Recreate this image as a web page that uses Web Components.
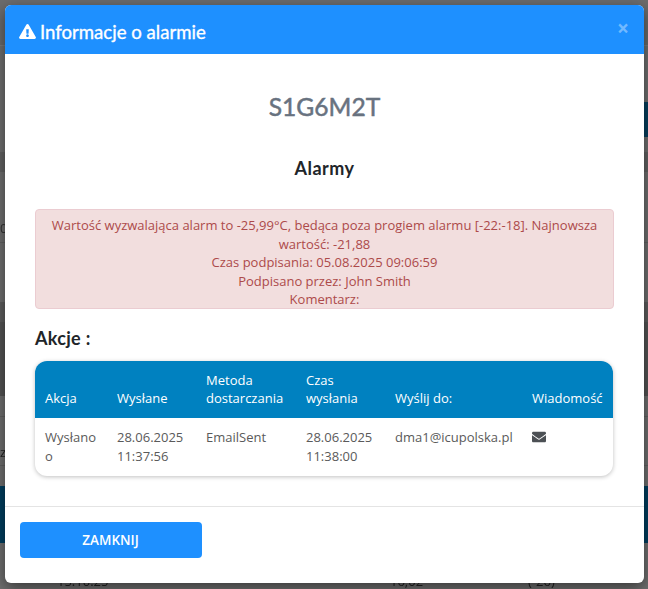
<!DOCTYPE html>
<html lang="pl"><head><meta charset="utf-8"><title>Informacje o alarmie</title>
<style>
html,body{margin:0;padding:0;height:100%;overflow:hidden}
body{font-family:"Open Sans","Liberation Sans",sans-serif;font-size:13px;color:#495057;background:#727272}
</style></head><body>
<bg-page></bg-page>
<alarm-modal>
  <span slot="title">Informacje o alarmie</span>
  <h-device>S1G6M2T</h-device>
  <h-section>Alarmy</h-section>
  <alarm-alert>
    Wartość wyzwalająca alarm to -25,99°C, będąca poza progiem alarmu [-22:-18]. Najnowsza wartość: -21,88<br>
    Czas podpisania: 05.08.2025 09:06:59<br>
    Podpisano przez: John Smith<br>
    Komentarz:
  </alarm-alert>
  <h-actions>Akcje :</h-actions>
  <action-table></action-table>
</alarm-modal>
<script>
function def(name, html){
  customElements.define(name, class extends HTMLElement{
    constructor(){super();this.attachShadow({mode:"open"}).innerHTML=html;}
  });
}
const head='"Lato","Noto Sans",sans-serif';
def("bg-page",`<style>
:host{display:block;height:589px;overflow:hidden;filter:blur(.6px);font:13px "Open Sans",sans-serif;color:#222}
.r{box-sizing:border-box;display:flex;align-items:center;background:#707070}
.l{border-bottom:1px solid #626262}
.band{margin-left:auto;width:60px;height:100%;background:#07405f}
.t{flex:0 0 390px;box-sizing:border-box;padding-left:57px}.u{flex:0 0 138px}
</style>
<div class="r l" style="height:46px;background:#6c6c6c;border-bottom-color:#7c7c7c"></div>
<div class="r" style="height:56px"></div>
<div class="r" style="height:35px"><span class="band"></span></div>
<div class="r" style="height:15px"></div>
<div class="r" style="height:20px;background:#636363"></div>
<div class="r l" style="height:71px;color:#333"><span style="margin-top:42px">0</span></div>
<div class="r" style="height:59px"></div>
<div class="r" style="height:20px;background:#5f5f5f"></div>
<div class="r" style="height:74px;background:#555"></div>
<div class="r l" style="height:21px"></div>
<div class="r l" style="height:49px"><span style="margin-top:22px">z</span></div>
<div class="r" style="height:20px"></div>
<div class="r" style="height:57px;background:#013f60"></div>
<div class="r" style="height:46px;align-items:flex-start"><span class="t" style="margin-top:29px">15:10:25</span><span class="u" style="margin-top:29px">16,02</span><span style="margin-top:29px">(-26)</span></div>
`);
def("alarm-modal",`<style>
:host{display:flex;flex-direction:column;position:absolute;left:5px;top:5px;width:639px;height:578px;background:#fff;border-radius:6px;box-shadow:0 5px 15px rgba(0,0,0,.5);overflow:hidden}
header{flex:none;height:49px;box-sizing:border-box;padding:4px 0 0 14px;background:#1e90ff;color:#fff;display:flex;align-items:center;gap:4px;position:relative;font:400 18.6px ${head};-webkit-text-stroke:.35px #fff}
header svg{width:17px;height:15px;fill:#fff;flex:none}
.x{position:absolute;right:15px;top:11px;font:700 21px/24px "Open Sans",sans-serif;color:rgba(255,255,255,.38);-webkit-text-stroke:0}
main{flex:1;padding:0 30px;display:flex;flex-direction:column}
footer{flex:none;height:77px;border-top:1px solid #e4e4e4;padding:15px;box-sizing:border-box}
button{display:block;width:182px;height:36px;border:0;border-radius:4px;background:#1e90ff;color:#fff;font:600 13.5px "Open Sans",sans-serif;padding:0 1px 0 0}
</style>
<header><svg viewBox="0 0 576 512"><path d="M569.517 440.013C587.975 472.007 564.806 512 527.94 512H48.054c-36.937 0-59.999-40.055-41.577-71.987L246.423 24.995c18.467-32.009 64.72-31.951 83.154 0l239.94 415.018zM288 354c-25.405 0-46 20.595-46 46s20.595 46 46 46 46-20.595 46-46-20.595-46-46-46zm-43.673-165.346l7.418 136c.347 6.364 5.609 11.346 11.982 11.346h48.546c6.373 0 11.635-4.982 11.982-11.346l7.418-136c.375-6.874-5.098-12.654-11.982-12.654h-63.383c-6.884 0-12.356 5.78-11.981 12.654z"/></svg><slot name="title"></slot><span class="x">×</span></header>
<main><slot></slot></main>
<footer><button>ZAMKNIJ</button></footer>`);
def("h-device",`<style>:host{display:block;margin-top:36px;text-align:center;font:400 24.6px/34px ${head};-webkit-text-stroke:.5px #68727f;color:#68727f}</style><slot></slot>`);
def("h-section",`<style>:host{display:block;margin-top:32px;text-align:center;font:700 18px/24px ${head};letter-spacing:.45px;color:#212529}</style><slot></slot>`);
def("alarm-alert",`<style>:host{display:block;margin-top:29px;box-sizing:border-box;height:100px;padding:6px 12px;background:#f2dede;border:1px solid #ebccd1;border-radius:4px;color:#ad4a4a;text-align:center;font:13px/18.5px "Open Sans",sans-serif}</style><slot></slot>`);
def("h-actions",`<style>:host{display:block;margin-top:17px;font:700 18px/24px ${head};letter-spacing:.3px;color:#212529}</style><slot></slot>`);
def("action-table",`<style>
:host{display:block;margin-top:11px;width:578px;border-radius:12px;box-shadow:0 1px 4px rgba(0,0,0,.25);overflow:hidden;font:13px/19px "Open Sans",sans-serif}
table{border-collapse:collapse;table-layout:fixed;width:578px}
th{height:57px;box-sizing:border-box;background:#0081c0;color:#fff;font-weight:500;line-height:18px;text-align:left;vertical-align:bottom;padding:0 10px 11px;white-space:nowrap}
td{height:57px;box-sizing:border-box;vertical-align:top;padding:10px;color:#5a5a5a;overflow-wrap:anywhere}
td.n{white-space:nowrap}
svg{width:14px;height:14px;fill:#4c5054;display:block;margin-top:2px}
</style>
<table><colgroup><col style="width:72px"><col style="width:89px"><col style="width:100px"><col style="width:89px"><col style="width:137px"><col style="width:91px"></colgroup>
<thead><tr><th>Akcja</th><th>Wysłane</th><th>Metoda<br>dostarczania</th><th>Czas<br>wysłania</th><th>Wyślij do:</th><th>Wiadomość</th></tr></thead>
<tbody><tr><td>Wysłanoo</td><td>28.06.2025 11:37:56</td><td>EmailSent</td><td>28.06.2025 11:38:00</td><td class="n">dma1@icupolska.pl</td><td><svg viewBox="0 0 512 512"><path d="M502.3 190.8c3.9-3.1 9.7-.2 9.7 4.7V400c0 26.5-21.5 48-48 48H48c-26.5 0-48-21.5-48-48V195.6c0-5 5.7-7.8 9.7-4.7 22.4 17.4 52.1 39.5 154.1 113.6 21.1 15.4 56.7 47.8 92.2 47.6 35.7.3 72-32.8 92.3-47.6 102-74.1 131.6-96.3 154-113.7zM256 320c23.2.4 56.6-29.2 73.4-41.4 132.7-96.3 142.8-104.7 173.4-128.7 5.8-4.5 9.2-11.5 9.2-18.9v-19c0-26.5-21.5-48-48-48H48C21.5 64 0 85.5 0 112v19c0 7.4 3.4 14.3 9.2 18.9 30.6 23.9 40.7 32.4 173.4 128.7 16.8 12.2 50.2 41.8 73.4 41.4z"/></svg></td></tr></tbody></table>`);
</script>
</body></html>
